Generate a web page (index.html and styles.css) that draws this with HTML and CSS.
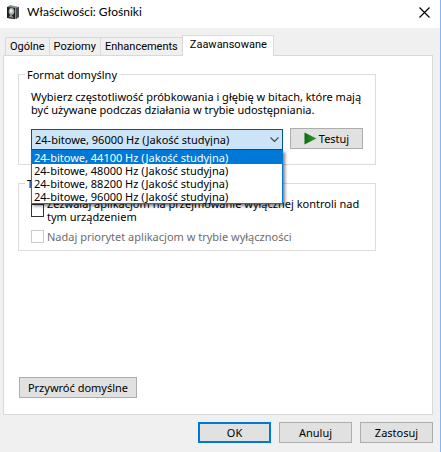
FILE: index.html
```html
<!DOCTYPE html>
<html lang="pl">
<head>
    <meta charset="UTF-8">
    <meta name="viewport" content="width=device-width, initial-scale=1.0">
    <title>Właściwości: Głośniki</title>
    <link rel="stylesheet" href="styles.css">
</head>
<body>
    <div class="window">
        <header class="titlebar">
            <svg class="app-icon" width="14" height="15" viewBox="0 0 14 15">
                <path d="M0 2 L3 0 L12 2 L12 12 L9 14 L0 13 Z" fill="#8a8c8e"/>
                <path d="M0 2 L8 3 L8 14 L0 13 Z" fill="#1b1d1f"/>
                <path d="M9 3 L12 2 L12 12 L9 14 Z" fill="#4b4e50"/>
                <ellipse cx="4.5" cy="6.5" rx="2.8" ry="3.4" fill="#a9afb1"/>
                <ellipse cx="4.2" cy="6" rx="1.4" ry="2" fill="#e6eaeb"/>
                <path d="M1.5 12 L4 9 L7 13 Z" fill="#8b9092"/>
            </svg>
            <h1>Właściwości: Głośniki</h1>
            <button class="close" aria-label="Zamknij">
                <svg width="11" height="11" viewBox="0 0 11 11">
                    <path d="M0.5 0.5 L10.5 10.5 M10.5 0.5 L0.5 10.5" stroke="#000" stroke-width="1.2"/>
                </svg>
            </button>
        </header>

        <main>
            <nav class="tabs" role="tablist">
                <button class="tab" role="tab">Ogólne</button>
                <button class="tab" role="tab">Poziomy</button>
                <button class="tab" role="tab">Enhancements</button>
                <button class="tab active" role="tab" aria-selected="true">Zaawansowane</button>
            </nav>

            <section class="panel">
                <fieldset class="format">
                    <legend>Format domyślny</legend>
                    <label for="format">Wybierz częstotliwość próbkowania i głębię w bitach, które mają<br>być używane podczas działania w trybie udostępniania.</label>
                    <div class="format-row">
                        <div class="combo">
                            <select id="format">
                                <option>24-bitowe, 44100 Hz (Jakość studyjna)</option>
                                <option>24-bitowe, 48000 Hz (Jakość studyjna)</option>
                                <option>24-bitowe, 88200 Hz (Jakość studyjna)</option>
                                <option selected>24-bitowe, 96000 Hz (Jakość studyjna)</option>
                            </select>
                            <svg class="arrow" width="9" height="6" viewBox="0 0 9 6">
                                <path d="M0.5 0.5 L4.5 4.5 L8.5 0.5" fill="none" stroke="#444" stroke-width="1.1"/>
                            </svg>
                            <ul class="menu" role="listbox">
                                <li class="current" role="option" aria-selected="true">24-bitowe, 44100 Hz (Jakość studyjna)</li>
                                <li role="option">24-bitowe, 48000 Hz (Jakość studyjna)</li>
                                <li role="option">24-bitowe, 88200 Hz (Jakość studyjna)</li>
                                <li role="option">24-bitowe, 96000 Hz (Jakość studyjna)</li>
                            </ul>
                        </div>
                        <button class="btn test">
                            <svg width="13" height="13" viewBox="0 0 13 13">
                                <defs>
                                    <linearGradient id="play" x1="0" y1="0" x2="1" y2="0">
                                        <stop offset="0" stop-color="#0b6a0b"/>
                                        <stop offset="1" stop-color="#35a035"/>
                                    </linearGradient>
                                </defs>
                                <path d="M0.5 0.5 L12.5 6.5 L0.5 12.5 Z" fill="url(#play)"/>
                            </svg>
                            Testuj
                        </button>
                    </div>
                </fieldset>

                <fieldset class="exclusive">
                    <legend>Tryb wyłączności</legend>
                    <div class="check">
                        <input type="checkbox" id="allow">
                        <label for="allow">Zezwalaj aplikacjom na przejmowanie wyłącznej kontroli nad<br>tym urządzeniem</label>
                    </div>
                    <div class="check">
                        <input type="checkbox" id="priority" disabled>
                        <label for="priority">Nadaj priorytet aplikacjom w trybie wyłączności</label>
                    </div>
                </fieldset>

                <button class="btn restore">Przywróć domyślne</button>
            </section>
        </main>

        <footer class="actions">
            <button class="btn default">OK</button>
            <button class="btn">Anuluj</button>
            <button class="btn">Zastosuj</button>
        </footer>
    </div>
</body>
</html>
```
FILE: styles.css
```css
* {
    box-sizing: border-box;
}

body {
    margin: 0;
    background-color: #f0f0f0;
    color: #000;
    font-family: "Noto Sans", "Open Sans", sans-serif;
    font-size: 11px;
    line-height: 13px;
}

button,
select {
    font: inherit;
    color: inherit;
}

.window {
    display: flex;
    flex-direction: column;
    min-height: 100vh;
    border-right: 1px solid #7fb8f5;
}

.titlebar {
    display: flex;
    align-items: center;
    height: 28px;
    padding: 0 10px 4px 7px;
    background-color: #fff;
}

.titlebar h1 {
    flex: 1;
    margin: 0 0 0 6px;
    font-family: Lato, sans-serif;
    font-size: 12px;
    font-weight: normal;
    line-height: 16px;
}

.close {
    display: flex;
    padding: 0;
    border: none;
    background: none;
}

main {
    display: flex;
    flex: 1;
    flex-direction: column;
    padding: 7px 7px 0 3px;
}

.tabs {
    display: flex;
    align-items: flex-end;
    padding-left: 2px;
}

.tab {
    height: 18px;
    padding: 0 4px;
    border: 1px solid #d9d9d9;
    border-right: none;
    border-bottom: none;
    background-color: #f0f0f0;
    font-family: Roboto, sans-serif;
    line-height: 16px;
}

.tab.active {
    position: relative;
    height: 21px;
    margin-bottom: -1px;
    padding: 0 6px 2px 7px;
    border-right: 1px solid #d9d9d9;
    background-color: #fff;
}

.panel {
    flex: 1;
    display: flex;
    flex-direction: column;
    padding: 12px 56px 16px 14px;
    border: 1px solid #d9d9d9;
    background-color: #fff;
}

fieldset {
    margin: 0;
    min-width: 0;
    border: 1px solid #dcdcdc;
}

legend {
    padding: 0 2px;
}

.format {
    padding: 9px 12px 14px;
}

.format legend,
.exclusive legend {
    margin-left: -6px;
}

.format > label {
    display: block;
    white-space: nowrap;
}

.format-row {
    display: flex;
    gap: 7px;
    margin-top: 12px;
}

.combo {
    position: relative;
    flex: 1;
    margin-top: 1px;
}

.combo select {
    display: block;
    width: 100%;
    height: 21px;
    padding: 0 3px;
    border: 1px solid #005499;
    border-radius: 0;
    background-color: #cce4f7;
    appearance: none;
}

.arrow {
    position: absolute;
    top: 8px;
    right: 4px;
    pointer-events: none;
}

/* open list of the combo box */
.menu {
    position: absolute;
    top: 100%;
    left: 0;
    right: 0;
    margin: 0;
    padding: 0;
    border: 1px solid #0078d7;
    background-color: #fff;
    box-shadow: 2px 2px 3px rgba(0, 0, 0, 0.5);
    list-style: none;
}

.menu li {
    padding: 0 2px;
}

.menu .current {
    background-color: #0078d7;
    color: #fff;
}

.btn {
    width: 73px;
    height: 21px;
    padding: 0;
    border: 1px solid #adadad;
    background-color: #e1e1e1;
}

.btn.default {
    border: 2px solid #0078d7;
}

.btn.test {
    display: flex;
    align-items: center;
    justify-content: center;
    gap: 2px;
}

.exclusive {
    margin-top: 12px;
    padding: 7px 12px 7px;
}

.check {
    display: flex;
    align-items: center;
    gap: 3px;
}

.check + .check {
    margin-top: 7px;
}

.check input {
    flex: none;
    width: 13px;
    height: 13px;
    margin: 0;
    border: 1px solid #333;
    background-color: #fff;
    appearance: none;
}

.check input:disabled {
    border-color: #ccc;
}

.check input:disabled + label {
    color: #6d6d6d;
}

.check label {
    white-space: nowrap;
}

.restore {
    width: 118px;
    margin-top: auto;
    margin-left: 1px;
}

.actions {
    display: flex;
    justify-content: flex-end;
    gap: 8px;
    padding: 7px 7px 9px;
}
```
